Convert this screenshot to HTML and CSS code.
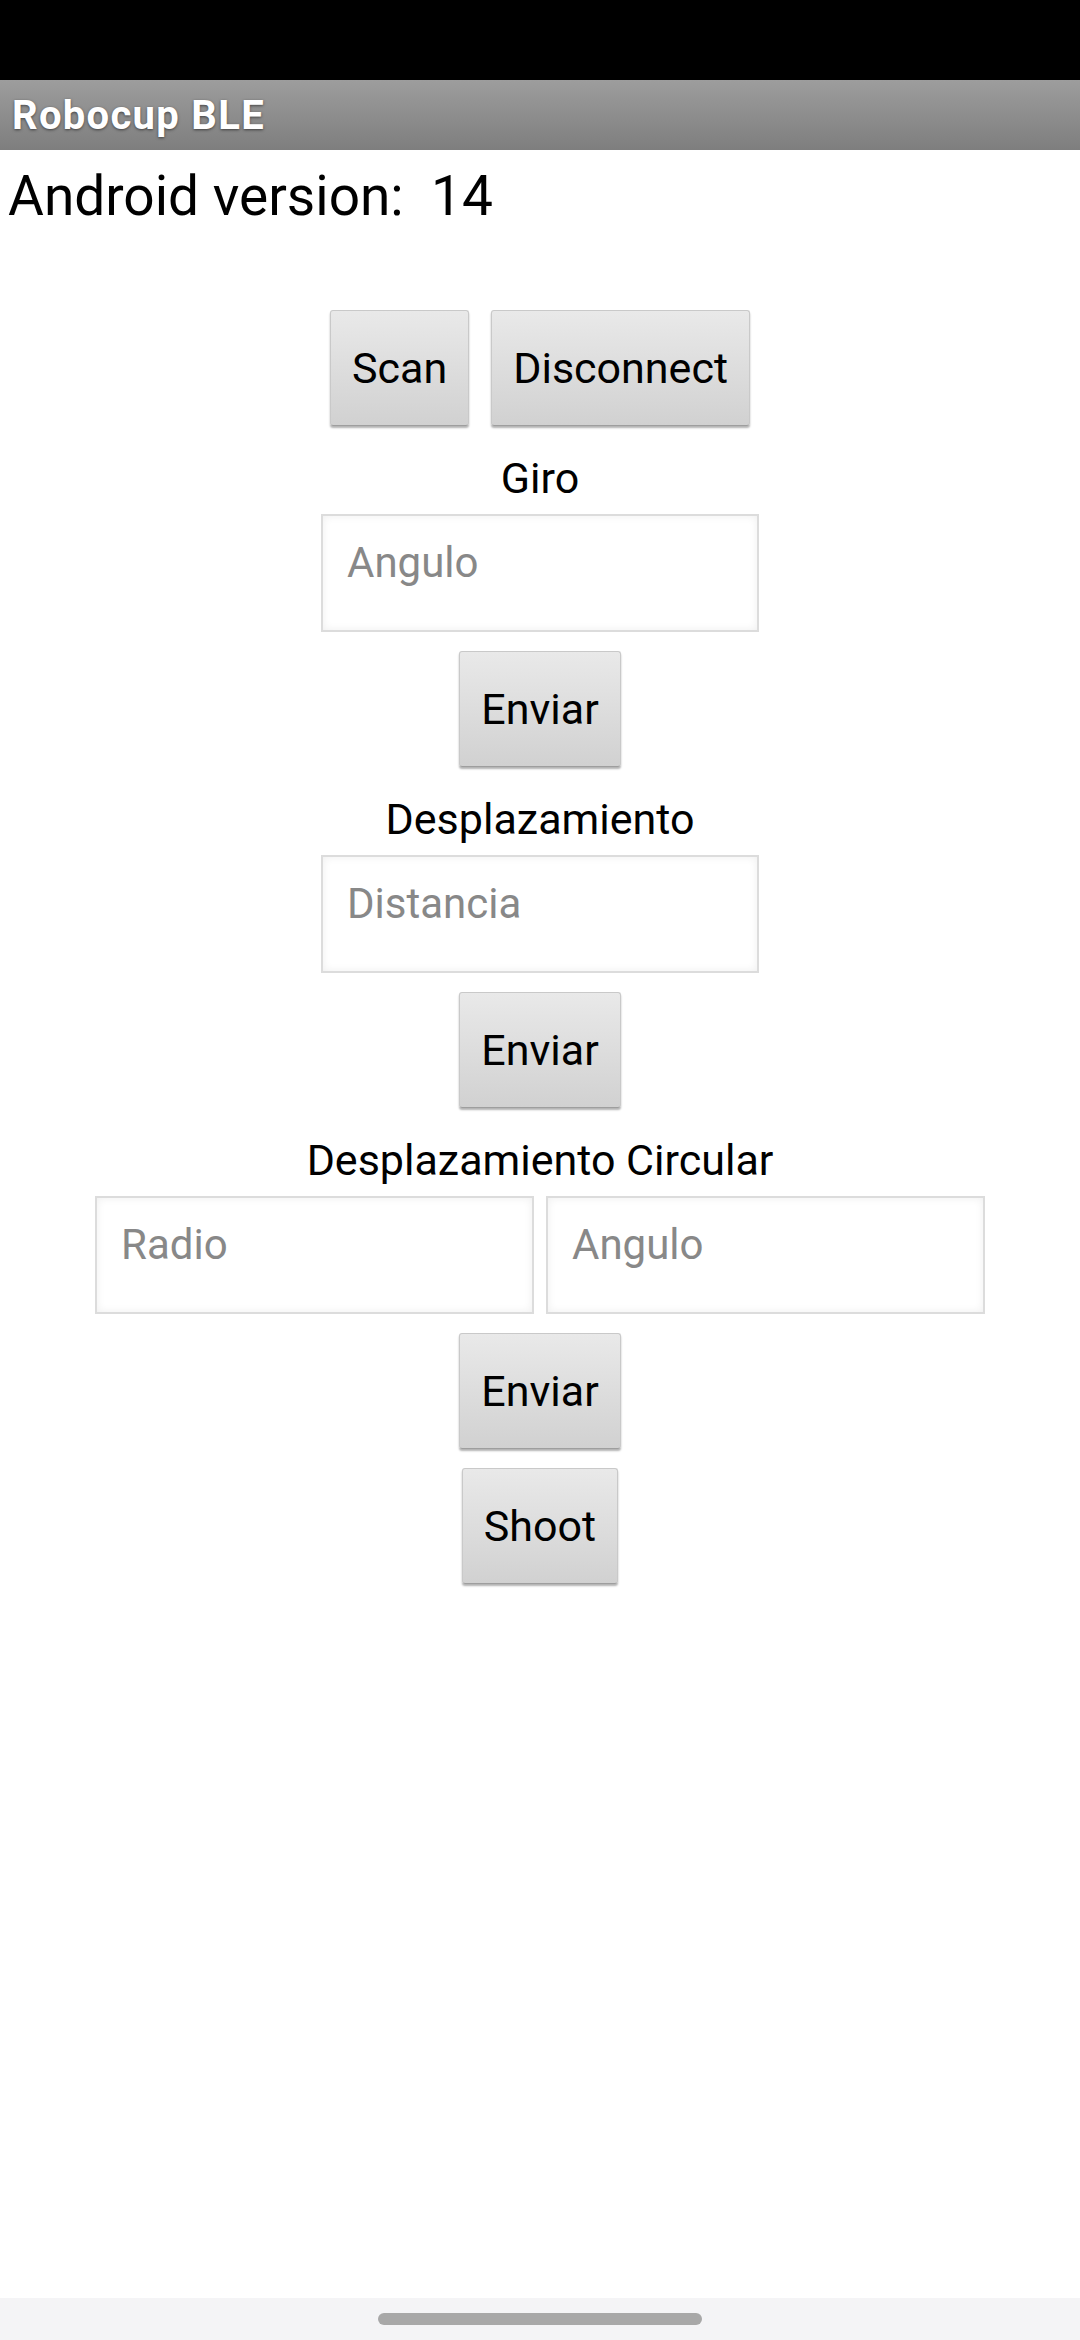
FILE: index.html
```html
<!DOCTYPE html>
<html lang="es">
<head>
<meta charset="utf-8">
<title>Robocup BLE</title>
<link rel="stylesheet" href="styles.css">
</head>
<body>
<div class="screen">
  <div class="statusbar"></div>
  <header class="titlebar"><h1 class="title">Robocup BLE</h1></header>
  <main class="content">
    <p class="version">Android version:&nbsp; 14</p>
    <div class="row top-row">
      <button class="btn">Scan</button>
      <button class="btn">Disconnect</button>
    </div>
    <section class="group">
      <div class="label">Giro</div>
      <input class="field" type="text" placeholder="Angulo">
      <button class="btn send">Enviar</button>
    </section>
    <section class="group">
      <div class="label">Desplazamiento</div>
      <input class="field" type="text" placeholder="Distancia">
      <button class="btn send">Enviar</button>
    </section>
    <section class="group">
      <div class="label">Desplazamiento Circular</div>
      <div class="row pair">
        <input class="field" type="text" placeholder="Radio">
        <input class="field" type="text" placeholder="Angulo">
      </div>
      <button class="btn send">Enviar</button>
      <button class="btn send">Shoot</button>
    </section>
  </main>
  <footer class="navbar"><div class="handle"></div></footer>
</div>
</body>
</html>
```

FILE: styles.css
```css
* { box-sizing: border-box; }
html, body { margin: 0; padding: 0; background: #ffffff; }
body {
  font-family: Roboto, "Noto Sans", "Liberation Sans", sans-serif;
  color: #000;
}
.screen {
  width: 1080px;
  height: 2340px;
  display: flex;
  flex-direction: column;
}
.statusbar { height: 80px; background: #000; flex: none; }
.titlebar {
  height: 70px;
  flex: none;
  background: linear-gradient(#9d9d9d, #7e7e7e);
  display: flex;
  align-items: center;
  padding-left: 12px;
}
.title {
  margin: 0;
  font-size: 40px;
  font-weight: 700;
  letter-spacing: 1.3px;
  color: #fff;
  line-height: 1;
  padding-top: 2px;
  text-shadow: 0 1px 3px rgba(0,0,0,0.55);
}
.content {
  flex: 1;
  display: flex;
  flex-direction: column;
  align-items: center;
}
.version {
  align-self: flex-start;
  margin: 14px 0 0 8px;
  font-size: 55px;
  line-height: 64px;
}
.row { display: flex; justify-content: center; }
.top-row { gap: 22px; margin-top: 82px; }
.btn {
  font-family: inherit;
  font-size: 43px;
  color: #000;
  height: 116px;
  padding: 0 21px;
  background: linear-gradient(#e9e9e9, #d1d1d1);
  border: 1px solid #c9c9c9;
  border-bottom-color: #9e9e9e;
  border-radius: 3px;
  box-shadow: 0 2px 2px rgba(0,0,0,0.3);
}
.group {
  display: flex;
  flex-direction: column;
  align-items: center;
}
.label {
  margin-top: 28px;
  font-size: 43px;
  line-height: 49px;
}
.field {
  display: block;
  margin-top: 11px;
  width: 438px;
  height: 118px;
  padding: 22px 24px 43px;
  font-family: inherit;
  font-size: 42px;
  line-height: 49px;
  border: 2px solid #dcdcdc;
  border-radius: 0;
  background: #fff;
  box-shadow: inset 0 0 8px rgba(0,0,0,0.07);
  outline: none;
}
.field::placeholder { color: #888888; }
.pair { gap: 12px; }
.pair .field { width: 439px; }
.send { margin-top: 19px; }
.navbar {
  height: 42px;
  flex: none;
  background: #f4f4f6;
  display: flex;
  justify-content: center;
  padding-top: 15px;
}
.handle {
  width: 324px;
  height: 12px;
  border-radius: 6px;
  background: #a8a8a8;
}
```
